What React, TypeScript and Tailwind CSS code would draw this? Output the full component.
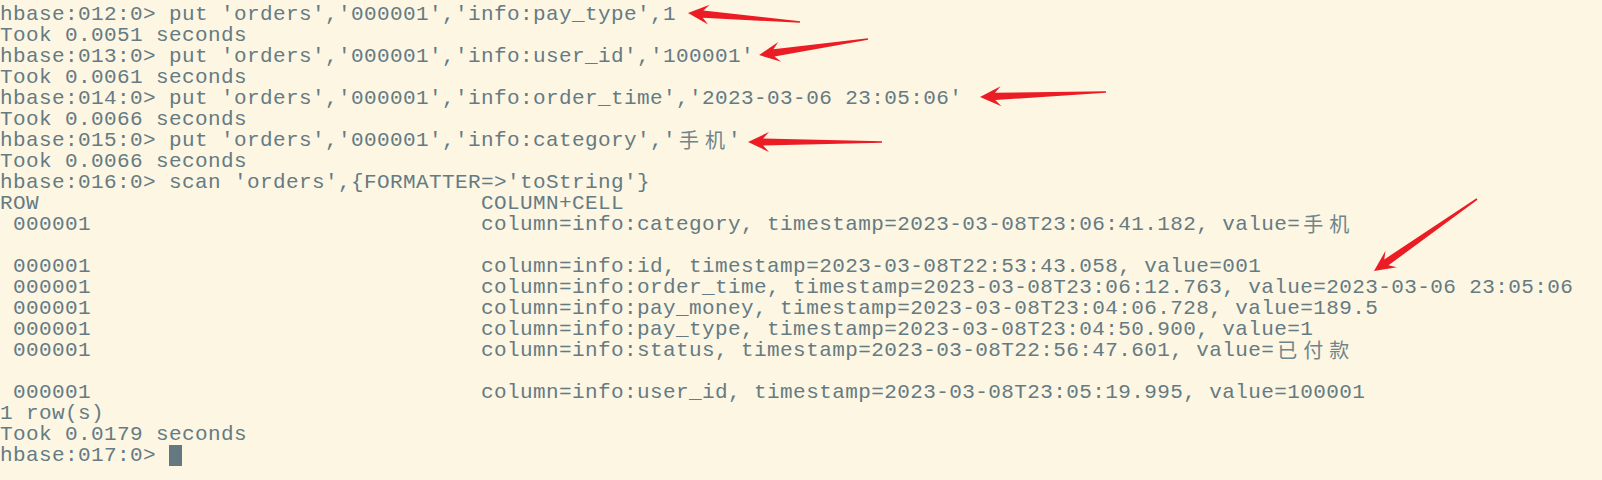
import React from "react";

const PAD = (s: string, n: number) => s + " ".repeat(Math.max(0, n - s.length));

const rowLines: [string, string][] = [
  [" 000001", "column=info:category, timestamp=2023-03-08T23:06:41.182, value=手机"],
  ["", ""],
  [" 000001", "column=info:id, timestamp=2023-03-08T22:53:43.058, value=001"],
  [" 000001", "column=info:order_time, timestamp=2023-03-08T23:06:12.763, value=2023-03-06 23:05:06"],
  [" 000001", "column=info:pay_money, timestamp=2023-03-08T23:04:06.728, value=189.5"],
  [" 000001", "column=info:pay_type, timestamp=2023-03-08T23:04:50.900, value=1"],
  [" 000001", "column=info:status, timestamp=2023-03-08T22:56:47.601, value=已付款"],
  ["", ""],
  [" 000001", "column=info:user_id, timestamp=2023-03-08T23:05:19.995, value=100001"],
];

const lines: string[] = [
  "hbase:012:0> put 'orders','000001','info:pay_type',1",
  "Took 0.0051 seconds",
  "hbase:013:0> put 'orders','000001','info:user_id','100001'",
  "Took 0.0061 seconds",
  "hbase:014:0> put 'orders','000001','info:order_time','2023-03-06 23:05:06'",
  "Took 0.0066 seconds",
  "hbase:015:0> put 'orders','000001','info:category','手机'",
  "Took 0.0066 seconds",
  "hbase:016:0> scan 'orders',{FORMATTER=>'toString'}",
  PAD("ROW", 37) + "COLUMN+CELL",
  ...rowLines.map(([a, b]) => (a || b ? PAD(a, 37) + b : "")),
  "1 row(s)",
  "Took 0.0179 seconds",
];

function Line({ text }: { text: string }) {
  const parts: React.ReactNode[] = [];
  let buf = "";
  let k = 0;
  for (const ch of Array.from(text)) {
    if (/[\u4e00-\u9fff]/.test(ch)) {
      if (buf) {
        parts.push(<span key={k++}>{buf}</span>);
        buf = "";
      }
      parts.push(
        <span
          key={k++}
          className="inline-block h-[21px] w-[26px] overflow-visible text-center align-top font-['Noto_Sans_CJK_SC',sans-serif] text-[20px] leading-[20px] tracking-normal text-[#6f858c]"
        >
          {ch}
        </span>
      );
    } else {
      buf += ch;
    }
  }
  if (buf) parts.push(<span key={k++}>{buf}</span>);
  return <div className="h-[21px] overflow-visible whitespace-pre">{parts}</div>;
}

type Pt = [number, number];

function arrowPoints(tail: Pt, tip: Pt, L = 21, W = 10, w1 = 3.6, w0 = 0.8) {
  const dx = tip[0] - tail[0];
  const dy = tip[1] - tail[1];
  const len = Math.hypot(dx, dy);
  const d: Pt = [dx / len, dy / len];
  const n: Pt = [-d[1], d[0]];
  const p = (base: Pt, along: number, perp: number): Pt => [
    base[0] + d[0] * along + n[0] * perp,
    base[1] + d[1] * along + n[1] * perp,
  ];
  const pts: Pt[] = [
    p(tail, 0, w0),
    p(tip, -L * 0.72, w1),
    p(tip, -L, W),
    tip,
    p(tip, -L, -W),
    p(tip, -L * 0.72, -w1),
    p(tail, 0, -w0),
  ];
  return pts.map((q) => `${q[0].toFixed(1)},${q[1].toFixed(1)}`).join(" ");
}

const arrows: [Pt, Pt][] = [
  [[800, 22], [688, 13]],
  [[868, 39], [759, 55]],
  [[1106, 92], [980, 97]],
  [[882, 142], [748, 142]],
  [[1477, 199], [1374, 271]],
];

export default function App() {
  return (
    <div className="relative h-[480px] w-full overflow-hidden bg-[#fdf6e3]">
      <div className="pt-[4px] font-['Liberation_Mono',monospace] text-[21px] leading-[21px] tracking-[0.4px] text-[#657b83]">
        {lines.map((t, i) => (
          <Line key={i} text={t} />
        ))}
        <div className="flex h-[21px] whitespace-pre">
          <span>hbase:017:0&gt; </span>
          <span className="inline-block h-[21px] w-[13px] bg-[#637880]" />
        </div>
      </div>
      <svg className="pointer-events-none absolute left-0 top-0" width="1602" height="480" viewBox="0 0 1602 480">
        {arrows.map(([a, b], i) => (
          <polygon key={i} points={arrowPoints(a, b)} fill="#ec1c24" />
        ))}
      </svg>
    </div>
  );
}
